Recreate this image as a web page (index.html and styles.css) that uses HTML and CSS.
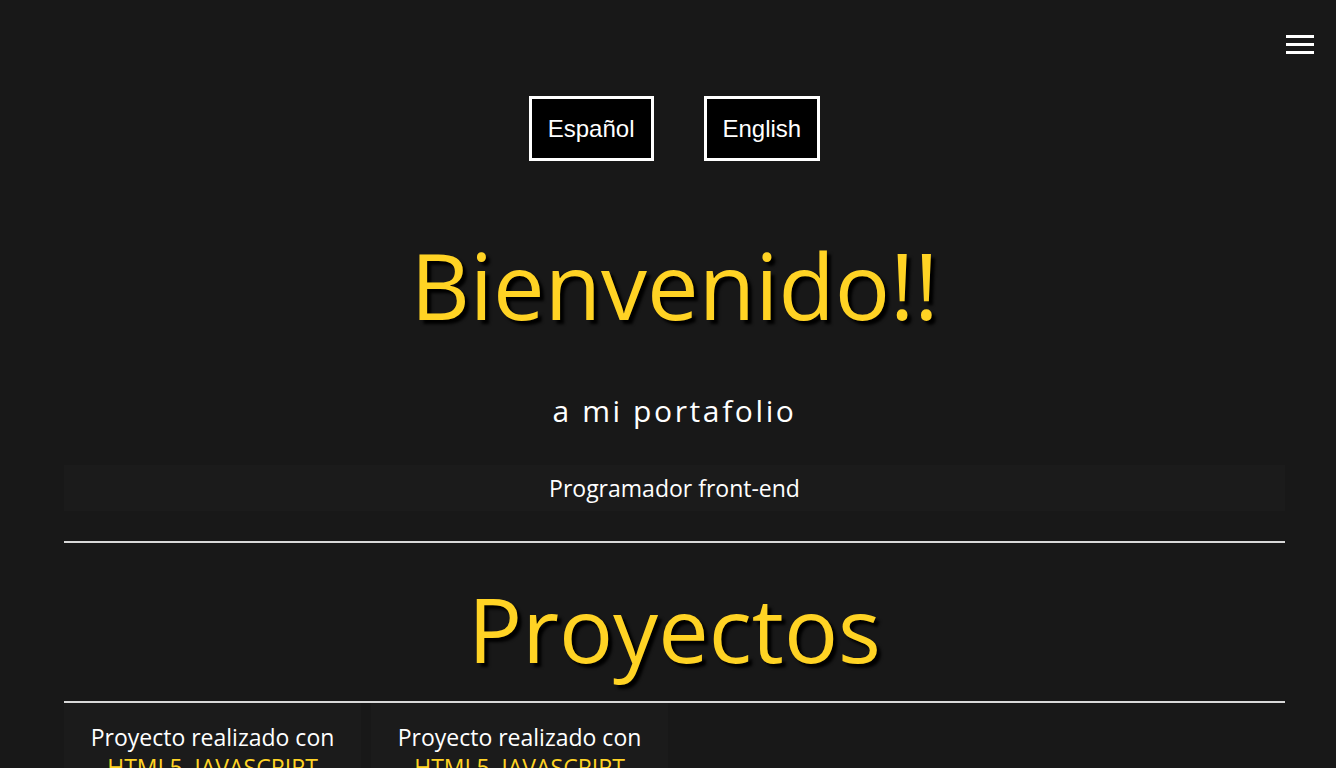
FILE: index.html
```html
<!DOCTYPE html>
<html lang="es">
<head>
<meta charset="utf-8">
<title>Portafolio</title>
<link rel="stylesheet" href="styles.css">
</head>
<body>
<header class="topbar">
  <button class="menu" aria-label="Menú">
    <span class="menu-bar"></span>
    <span class="menu-bar"></span>
    <span class="menu-bar"></span>
  </button>
</header>
<main class="page">
  <div class="langs">
    <button class="lang lang-es">Español</button>
    <button class="lang lang-en">English</button>
  </div>
  <h1 class="title title-welcome">Bienvenido!!</h1>
  <p class="subtitle">a mi portafolio</p>
  <p class="role">Programador front-end</p>
  <hr class="rule">
  <h2 class="title title-projects">Proyectos</h2>
  <hr class="rule rule-projects">
  <section class="cards">
    <article class="card">
      <p class="card-text">Proyecto realizado con</p>
      <p class="card-tech">HTML5, JAVASCRIPT</p>
    </article>
    <article class="card">
      <p class="card-text">Proyecto realizado con</p>
      <p class="card-tech">HTML5, JAVASCRIPT</p>
    </article>
  </section>
</main>
</body>
</html>
```
FILE: styles.css
```css
html, body {
  margin: 0;
  padding: 0;
  background: #181818;
  overflow: hidden;
}
body {
  font-family: "Segoe UI", "Open Sans", "Noto Sans", sans-serif;
  color: #ffffff;
}
.topbar {
  position: absolute;
  top: 35px;
  right: 22px;
}
.menu {
  display: flex;
  flex-direction: column;
  gap: 5px;
  background: none;
  border: 0;
  padding: 0;
  width: 28px;
}
.menu-bar {
  display: block;
  width: 28px;
  height: 3px;
  background: #ffffff;
}
.page {
  margin: 0 51px 0 64px;
  padding-top: 96px;
  text-align: center;
}
.langs {
  display: flex;
  justify-content: center;
  gap: 50px;
}
.lang {
  font-family: "Liberation Sans", Arial, sans-serif;
  font-size: 24px;
  color: #ffffff;
  background: #000000;
  border: 3px solid #ffffff;
  height: 65px;
  padding: 0 16px;
}
.title {
  margin: 0;
  font-weight: 400;
  font-size: 92px;
  color: #ffd324;
  text-shadow: 4px 4px 3px #000000;
  line-height: 1;
}
.title-welcome {
  margin-top: 78px;
}
.subtitle {
  margin: 62px 0 0;
  font-size: 30px;
  letter-spacing: 2.6px;
  line-height: 1.2;
}
.role {
  margin: 36px 0 0;
  background: #1b1b1b;
  font-size: 23px;
  height: 46px;
  line-height: 46px;
}
.rule {
  margin: 30px 0 0;
  border: 0;
  height: 2px;
  background: #d8d8d8;
}
.title-projects {
  margin-top: 40px;
  font-size: 90px;
}
.rule-projects {
  margin-top: 28px;
}
.cards {
  display: flex;
  gap: 10px;
}
.card {
  width: 297px;
  background: #1b1b1b;
  padding-top: 20px;
}
.card-text {
  margin: 0;
  font-size: 23px;
  line-height: 1.3;
}
.card-tech {
  margin: 0;
  font-size: 23px;
  color: #ffd324;
  line-height: 1.3;
}
```
